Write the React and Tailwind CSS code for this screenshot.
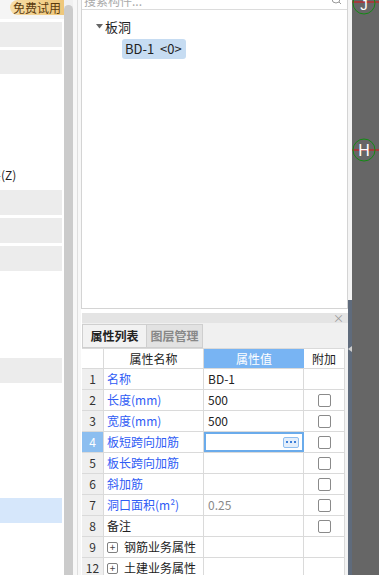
import React from 'react';

const font = { fontFamily: '"Noto Sans CJK SC", "Noto Sans", sans-serif' };

const rows = [
  { n: '1', name: '名称', value: 'BD-1', blue: true, check: false },
  { n: '2', name: '长度(mm)', value: '500', blue: true, check: true },
  { n: '3', name: '宽度(mm)', value: '500', blue: true, check: true },
  { n: '4', name: '板短跨向加筋', value: '', blue: true, check: true, active: true },
  { n: '5', name: '板长跨向加筋', value: '', blue: true, check: true },
  { n: '6', name: '斜加筋', value: '', blue: true, check: true },
  { n: '7', name: '洞口面积(m²)', value: '0.25', blue: true, check: true, gray: true },
  { n: '8', name: '备注', value: '', blue: false, check: true },
  { n: '9', name: '钢筋业务属性', value: '', group: true },
  { n: '12', name: '土建业务属性', value: '', group: true },
];

function Checkbox() {
  return <div className="w-[13px] h-[13px] rounded-[2px] border border-[#8a8a8a] bg-white" />;
}

function PlusBox() {
  return (
    <div className="w-[11px] h-[11px] rounded-[2px] border border-[#808080] flex items-center justify-center text-[10px] leading-none text-[#444]">
      +
    </div>
  );
}

function Row({ r }) {
  return (
    <div className="grid grid-cols-[22px_100px_100px_41px] h-[21px] border-b border-[#dadada] text-[12px]">
      <div
        className={`flex items-center justify-center border-r border-[#dadada] ${
          r.active ? 'bg-[#8cbef0] text-white' : 'bg-[#efefef] text-[#333]'
        }`}
      >
        {r.n}
      </div>
      <div
        className={`flex items-center pl-[3px] border-r border-[#dadada] bg-white ${
          r.blue ? 'text-[#2f5cf5]' : 'text-[#222]'
        }`}
      >
        {r.group ? (
          <>
            <PlusBox />
            <span className="ml-[6px]">{r.name}</span>
          </>
        ) : (
          r.name
        )}
      </div>
      {r.active ? (
        <div className="flex items-center justify-end pr-[3px] border-2 border-[#6aabeb] bg-white">
          <div className="w-[16px] h-[11px] rounded-[2px] border border-[#8fbef0] bg-[#e3eefb] flex items-center justify-center gap-[2px]">
            <div className="w-[2px] h-[2px] bg-[#3d7fd8]" />
            <div className="w-[2px] h-[2px] bg-[#3d7fd8]" />
            <div className="w-[2px] h-[2px] bg-[#3d7fd8]" />
          </div>
        </div>
      ) : (
        <div
          className={`flex items-center pl-[4px] border-r border-[#dadada] bg-white ${
            r.gray ? 'text-[#8a8a8a]' : 'text-[#222]'
          }`}
        >
          {r.value}
        </div>
      )}
      <div className="flex items-center justify-center bg-white border-r border-[#dadada]">
        {r.check && <Checkbox />}
      </div>
    </div>
  );
}

export default function App() {
  return (
    <div className="w-[379px] h-[575px] overflow-hidden flex bg-white" style={font}>
      {/* left column */}
      <div className="w-[64px] flex flex-col shrink-0 bg-white">
        <div className="h-[19px] bg-[#f5f5f5] flex items-start justify-end">
          <div className="h-[15px] w-[54px] rounded-l-[8px] bg-gradient-to-r from-[#f6dca6] to-[#efc779] text-[12px] leading-[15px] text-[#5a3a0e] pl-[3px] whitespace-nowrap overflow-hidden">
            免费试用
          </div>
        </div>
        <div className="h-[3px]" />
        <div className="h-[25px] mr-[2px] bg-[#ececec]" />
        <div className="h-[3px]" />
        <div className="h-[24px] mr-[2px] bg-[#ececec]" />
        <div className="h-[93px]" />
        <div className="h-[16px] text-[12px] leading-[16px] text-[#222] whitespace-nowrap ml-[-11px]">
          层(Z)
        </div>
        <div className="h-[7px]" />
        <div className="h-[25px] mr-[2px] bg-[#ececec]" />
        <div className="h-[3px]" />
        <div className="h-[25px] mr-[2px] bg-[#ececec]" />
        <div className="h-[3px]" />
        <div className="h-[25px] mr-[2px] bg-[#ececec]" />
        <div className="h-[87px]" />
        <div className="h-[25px] mr-[2px] bg-[#ececec]" />
        <div className="h-[115px]" />
        <div className="h-[25px] mr-[2px] bg-[#d6e7fb]" />
      </div>

      {/* scrollbar */}
      <div className="w-[9px] shrink-0 bg-[#f0f0f0] pt-[5px]">
        <div className="h-full rounded-t-[5px] bg-[#cbcbcb]" />
      </div>

      {/* splitter */}
      <div className="w-[8px] shrink-0 bg-[#f7f7f7] flex justify-center">
        <div className="w-px h-full bg-[#dedede]" />
      </div>

      {/* middle column */}
      <div className="w-[267px] shrink-0 flex flex-col bg-white">
        <div className="h-[309px] shrink-0 border border-t-0 border-[#d4d4d4] flex flex-col">
          <div className="h-[10px] border-b border-[#dcdcdc] flex justify-between overflow-hidden">
            <span className="text-[12px] leading-[12px] mt-[-5px] ml-[2px] text-[#aaa]">搜索构件...</span>
            <svg width="12" height="10" viewBox="0 0 12 10" className="mr-[4px]">
              <circle cx="5" cy="-1" r="4" fill="none" stroke="#999" strokeWidth="1" />
              <line x1="8" y1="2" x2="10" y2="4" stroke="#999" strokeWidth="1" />
            </svg>
          </div>
          <div className="flex items-center h-[15px] mt-[9px] ml-[14px] text-[13px] text-[#222]">
            <svg width="7" height="5" viewBox="0 0 7 5" className="mr-[2px]">
              <path d="M0 0 L7 0 L3.5 4.5 Z" fill="#666" />
            </svg>
            板洞
          </div>
          <div className="mt-[5px] ml-[40px] w-[64px] h-[20px] rounded-[3px] bg-[#c6dcf2] text-[13px] leading-[20px] text-[#222] pl-[3px] whitespace-pre">
            {'BD-1  <0>'}
          </div>
        </div>
        <div className="h-[4px] shrink-0" />
        <div className="h-[10px] shrink-0 ml-px bg-[#e4e4e4] flex justify-end items-center pr-[4px]">
          <span className="text-[11px] leading-none text-[#999]">×</span>
        </div>
        <div className="ml-px shrink-0 flex flex-col bg-[#f3f3f3]">
          <div className="h-[25px] shrink-0 bg-[#f0f0f0] flex items-stretch text-[12px] pt-px">
            <div className="w-[65px] border border-[#cfcfcf] bg-[#f2f2f2] flex items-center justify-center font-bold text-[#222]">
              属性列表
            </div>
            <div className="w-[56px] border border-l-0 border-[#cfcfcf] bg-[#e2e2e2] flex items-center justify-center font-bold text-[#888]">
              图层管理
            </div>
          </div>
          <div className="grid grid-cols-[22px_100px_100px_41px] h-[21px] shrink-0 border-y border-[#dadada] text-[12px] bg-white w-[263px]">
            <div className="border-r border-[#dadada]" />
            <div className="flex items-center justify-center border-r border-[#dadada] text-[#222]">属性名称</div>
            <div className="flex items-center justify-center bg-[#78b4f3] text-white">属性值</div>
            <div className="flex items-center justify-center border-r border-[#dadada] text-[#222]">附加</div>
          </div>
          <div className="w-[263px] shrink-0">
            {rows.map((r) => (
              <Row key={r.n} r={r} />
            ))}
          </div>
        </div>
      </div>

      {/* thin strip */}
      <div className="w-[4px] shrink-0 flex flex-col">
        <div className="h-[300px] shrink-0 bg-[#f4f4f4]" />
        <div className="flex-1 bg-[#5f6b7c] flex flex-col items-center pt-[46px]">
          <svg width="4" height="6" viewBox="0 0 4 6">
            <path d="M4 0 L0 3 L4 6 Z" fill="#d0d0d0" />
          </svg>
        </div>
      </div>

      {/* dark canvas */}
      <div className="flex-1 bg-[#666666]">
        <svg width="27" height="575" viewBox="0 0 27 575">
          <line x1="0" y1="2" x2="27" y2="2" stroke="#e01010" strokeWidth="1" />
          <circle cx="12" cy="3" r="11" fill="none" stroke="#138a13" strokeWidth="1" />
          <text x="12" y="10" textAnchor="middle" fontSize="15" fill="#fff" fontFamily="Liberation Sans, sans-serif">J</text>
          <line x1="0" y1="150" x2="27" y2="150" stroke="#e01010" strokeWidth="1" />
          <circle cx="12" cy="150" r="11" fill="none" stroke="#138a13" strokeWidth="1" />
          <text x="12" y="156" textAnchor="middle" fontSize="16" fill="#fff" fontFamily="Liberation Sans, sans-serif">H</text>
        </svg>
      </div>
    </div>
  );
}
